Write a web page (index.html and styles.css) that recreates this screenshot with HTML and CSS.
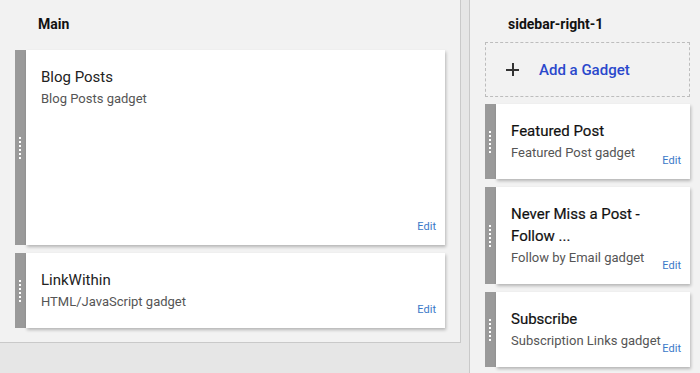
FILE: index.html
```html
<!DOCTYPE html>
<html lang="en">
<head>
    <meta charset="UTF-8">
    <meta name="viewport" content="width=device-width, initial-scale=1.0">
    <title>Layout - Gadgets</title>
    <link rel="stylesheet" href="styles.css">
</head>
<body>
    <div class="layout">
        <!-- Kolom utama -->
        <section class="panel panel-main">
            <h2 class="section-title">Main</h2>
            <div class="gadget-list">
                <div class="gadget">
                    <div class="handle"><span class="dots"></span></div>
                    <div class="card card-tall">
                        <div class="card-title">Blog Posts</div>
                        <div class="card-sub">Blog Posts gadget</div>
                        <a class="edit" href="#">Edit</a>
                    </div>
                </div>
                <div class="gadget">
                    <div class="handle"><span class="dots"></span></div>
                    <div class="card">
                        <div class="card-title">LinkWithin</div>
                        <div class="card-sub">HTML/JavaScript gadget</div>
                        <a class="edit" href="#">Edit</a>
                    </div>
                </div>
            </div>
        </section>

        <!-- Sidebar kanan -->
        <section class="panel panel-side">
            <h2 class="section-title side-title">sidebar-right-1</h2>
            <a class="add-gadget" href="#">
                <span class="plus"></span>
                <span>Add a Gadget</span>
            </a>
            <div class="gadget-list">
                <div class="gadget">
                    <div class="handle"><span class="dots"></span></div>
                    <div class="card">
                        <div class="card-title">Featured Post</div>
                        <div class="card-sub">Featured Post gadget</div>
                        <a class="edit" href="#">Edit</a>
                    </div>
                </div>
                <div class="gadget">
                    <div class="handle"><span class="dots"></span></div>
                    <div class="card">
                        <div class="card-title">Never Miss a Post - Follow ...</div>
                        <div class="card-sub">Follow by Email gadget</div>
                        <a class="edit" href="#">Edit</a>
                    </div>
                </div>
                <div class="gadget">
                    <div class="handle"><span class="dots"></span></div>
                    <div class="card">
                        <div class="card-title">Subscribe</div>
                        <div class="card-sub">Subscription Links gadget</div>
                        <a class="edit" href="#">Edit</a>
                    </div>
                </div>
            </div>
        </section>
    </div>
</body>
</html>
```

FILE: styles.css
```css
/* Layout editor: dua kolom dengan kartu gadget */
* {
    box-sizing: border-box;
}

body {
    font-family: 'Roboto', 'Liberation Sans', sans-serif;
    background-color: #e6e6e6;
    color: #222;
    margin: 0;
    padding: 0;
}

.layout {
    display: flex;
    height: 373px;
    overflow: hidden;
}

.panel {
    background-color: #f2f2f2;
    padding: 0 15px;
}

.panel-main {
    width: 461px;
    height: 343px;
    margin-right: 8px;
    border-right: 1px solid #c9c9c9;
    border-bottom: 1px solid #c9c9c9;
}

.panel-side {
    flex: 1;
    padding-right: 10px;
    border-left: 1px solid #c9c9c9;
}

.section-title {
    margin: 0 0 16px;
    padding: 14px 0 0 23px;
    font-size: 14px;
    font-weight: 700;
    line-height: 20px;
    color: #111;
}

.side-title {
    margin-bottom: 8px;
}

.gadget-list {
    display: flex;
    flex-direction: column;
    gap: 8px;
}

.gadget {
    display: flex;
}

.handle {
    width: 11px;
    flex-shrink: 0;
    background-color: #9a9a9a;
    display: flex;
    align-items: center;
    justify-content: center;
}

.dots {
    width: 2px;
    height: 22px;
    margin-left: -1px;
    background: repeating-linear-gradient(to bottom, #fff 0 2px, transparent 2px 4px);
}

.card {
    flex: 1;
    position: relative;
    background-color: #fff;
    padding: 16px 15px 15px;
    box-shadow: 1px 2px 3px rgba(0, 0, 0, 0.25);
}

.card-tall {
    height: 195px;
}

.card-title {
    font-size: 15px;
    line-height: 22px;
    color: #222;
}

/* judul gadget di sidebar sedikit lebih gelap */
.panel-side .card-title {
    color: #111;
    -webkit-text-stroke: 0.2px #111;
}

.card-sub {
    font-size: 13px;
    line-height: 22px;
    color: #555;
}

.edit {
    position: absolute;
    right: 9px;
    bottom: 12px;
    font-size: 11px;
    line-height: 12px;
    color: #3b78c8;
    text-decoration: none;
}

.add-gadget {
    display: flex;
    align-items: center;
    height: 55px;
    margin-bottom: 7px;
    padding-left: 20px;
    border: 1px dashed #bdbdbd;
    font-size: 15px;
    font-weight: 500;
    color: #2a48cc;
    text-decoration: none;
}

.plus {
    position: relative;
    width: 13px;
    height: 13px;
    margin-right: 20px;
}

.plus::before,
.plus::after {
    content: '';
    position: absolute;
    background-color: #333;
}

.plus::before {
    left: 0;
    top: 6px;
    width: 13px;
    height: 2px;
}

.plus::after {
    left: 6px;
    top: 0;
    width: 2px;
    height: 13px;
}
```
